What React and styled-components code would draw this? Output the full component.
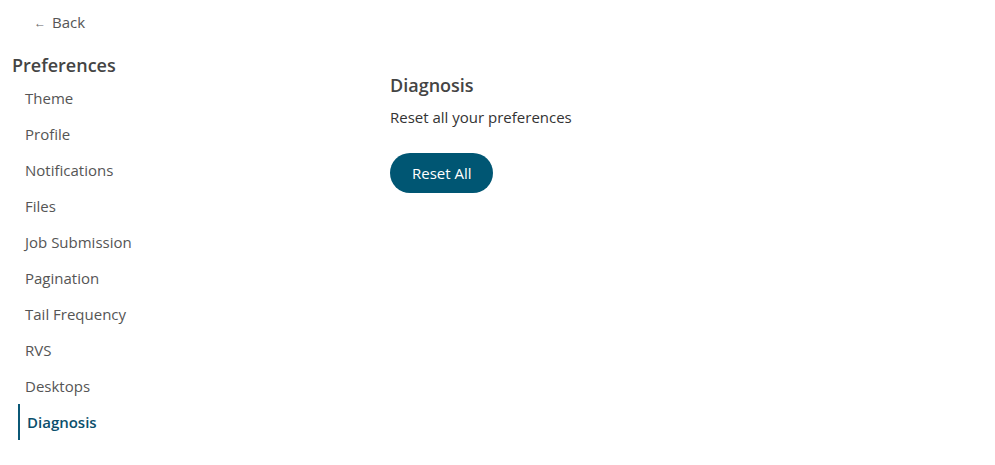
import React from 'react'
import styled, { createGlobalStyle } from 'styled-components'

const Global = createGlobalStyle`
body {
  margin: 0;
  background: #fff;
  font-family: "Open Sans", "Noto Sans", sans-serif;
}
`
const Page = styled.div`
display: grid;
grid-template-columns: 390px 1fr;
width: 995px;
height: 465px;
`
const Side = styled.div`
display: flex;
flex-direction: column;
padding: 11px 0 0 12px;
`
const BackLink = styled.a`
display: flex;
align-items: center;
gap: 6px;
margin-left: 22px;
height: 22px;
font-size: 15px;
color: #555;
cursor: pointer;
`
const Arrow = styled.span`
font-size: 12px;
color: #666;
`
const Heading = styled.h2`
margin: 20px 0 0;
font-size: 18px;
line-height: 24px;
font-weight: 600;
color: #444;
`
const Menu = styled.ul`
list-style: none;
margin: 3px 0 0;
padding: 0;
`
const Item = styled.li`
height: 36px;
display: flex;
align-items: center;
font-size: 15px;
color: ${p => (p.active ? '#0b4f6c' : '#555')};
font-weight: ${p => (p.active ? 600 : 400)};
padding-left: ${p => (p.active ? '7px' : '13px')};
margin-left: ${p => (p.active ? '6px' : '0')};
border-left: ${p => (p.active ? '2px solid #0b5876' : 'none')};
box-sizing: border-box;
cursor: pointer;
`
const Content = styled.div`
display: flex;
flex-direction: column;
align-items: flex-start;
padding-top: 73px;
`
const Title = styled.h3`
margin: 0;
font-size: 18px;
line-height: 24px;
font-weight: 600;
color: #444;
`
const Descr = styled.p`
margin: 10px 0 0;
font-size: 15px;
line-height: 20px;
color: #333;
`
const Button = styled.button`
margin-top: 26px;
height: 40px;
padding: 0 21px 0 22px;
border: none;
border-radius: 20px;
background: #005673;
color: #fff;
font-family: inherit;
font-size: 15px;
cursor: pointer;
`

const items = ['Theme', 'Profile', 'Notifications', 'Files', 'Job Submission', 'Pagination', 'Tail Frequency', 'RVS', 'Desktops', 'Diagnosis']

const App = () => {
  return (
    <Page>
      <Global />
      <Side>
        <BackLink><Arrow>←</Arrow>Back</BackLink>
        <Heading>Preferences</Heading>
        <Menu>
          {items.map(i => (
            <Item key={i} active={i === 'Diagnosis'}>{i}</Item>
          ))}
        </Menu>
      </Side>
      <Content>
        <Title>Diagnosis</Title>
        <Descr>Reset all your preferences</Descr>
        <Button>Reset All</Button>
      </Content>
    </Page>
  )
}

export default App
